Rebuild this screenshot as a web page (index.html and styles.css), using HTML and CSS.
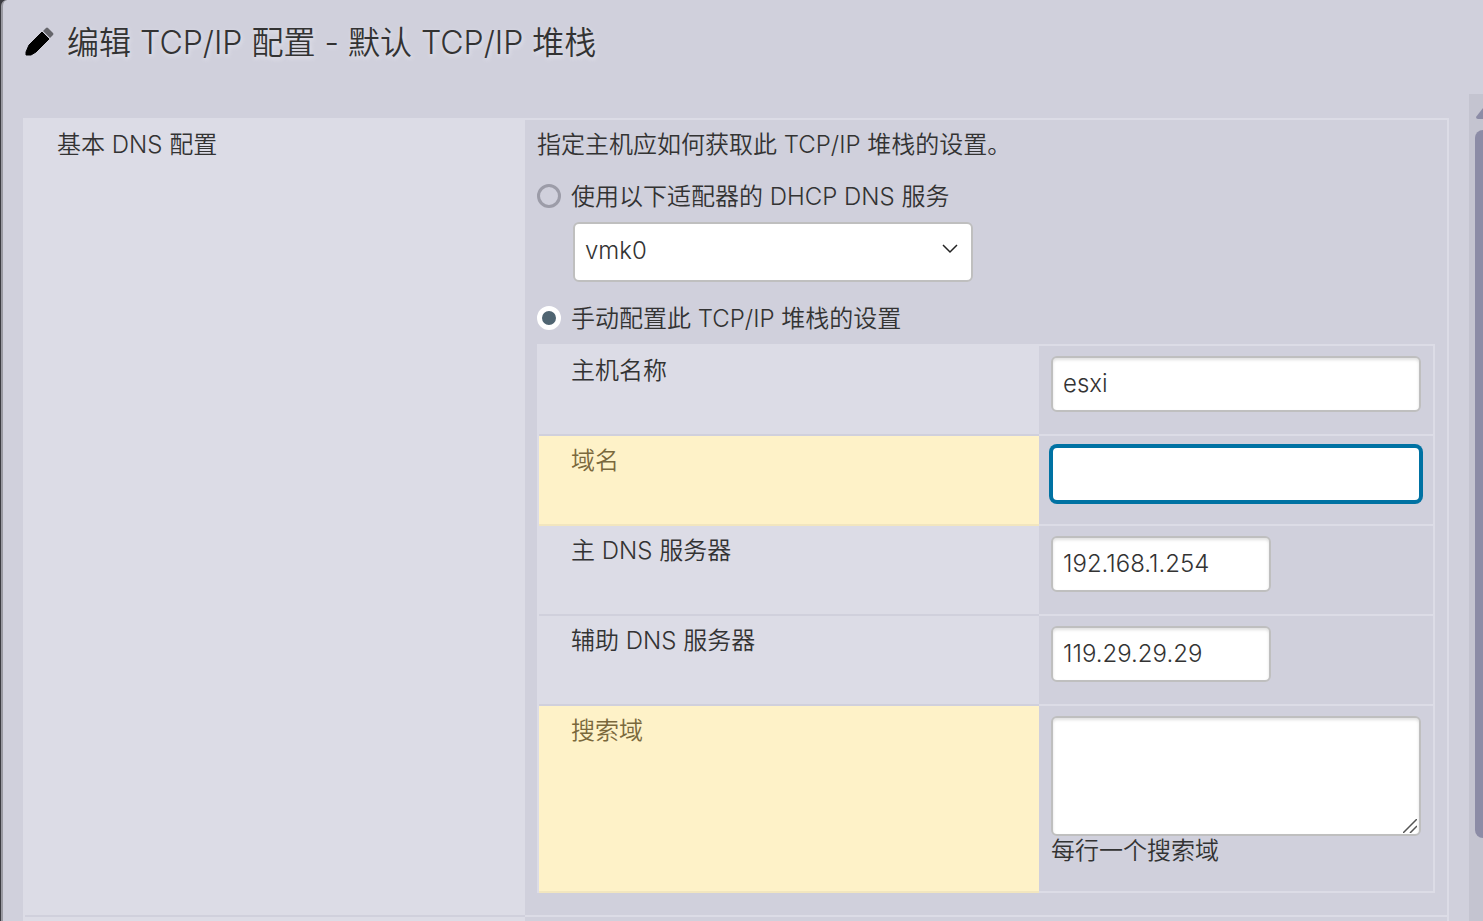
FILE: index.html
```html
<!DOCTYPE html>
<html lang="zh-CN">
<head>
    <meta charset="UTF-8">
    <meta name="viewport" content="width=device-width, initial-scale=1.0">
    <title>编辑 TCP/IP 配置</title>
    <link rel="stylesheet" href="styles.css">
</head>
<body>
    <div class="dialog">
        <header class="dialog-header">
            <svg class="pencil-icon" viewBox="0 0 32 30" aria-hidden="true">
                <path d="M3 28 L3 25 L6 18 L19 5 L26 12 L13 25 L8 28 Z" fill="#000" stroke="#000" stroke-linejoin="round"/>
                <path d="M20 4 L23 1 Q24 0 25 1 L30 6 Q31 7 30 8 L27 11 Z" fill="#65656b"/>
            </svg>
            <h1>编辑 TCP/IP 配置 - 默认 TCP/IP 堆栈</h1>
        </header>
        <div class="dialog-body">
            <form class="settings">
                <div class="row">
                    <div class="name">基本 DNS 配置</div>
                    <div class="value section">
                        <p class="intro">指定主机应如何获取此 TCP/IP 堆栈的设置。</p>
                        <div class="option">
                            <input type="radio" name="mode" id="modeDhcp">
                            <label for="modeDhcp">使用以下适配器的 DHCP DNS 服务</label>
                        </div>
                        <div class="select-wrap">
                            <select aria-label="适配器">
                                <option>vmk0</option>
                            </select>
                            <svg class="chevron" viewBox="0 0 16 10" aria-hidden="true">
                                <path d="M1 1 L8 8 L15 1" fill="none" stroke="#222" stroke-width="1.5"/>
                            </svg>
                        </div>
                        <div class="option">
                            <input type="radio" name="mode" id="modeManual" checked>
                            <label for="modeManual">手动配置此 TCP/IP 堆栈的设置</label>
                        </div>
                        <div class="settings">
                            <div class="row">
                                <label class="name" for="hostName">主机名称</label>
                                <div class="value"><input type="text" id="hostName" value="esxi"></div>
                            </div>
                            <div class="row warning">
                                <label class="name" for="domainName">域名</label>
                                <div class="value"><input type="text" id="domainName" class="active"></div>
                            </div>
                            <div class="row">
                                <label class="name" for="primaryDns">主 DNS 服务器</label>
                                <div class="value"><input type="text" id="primaryDns" class="short" value="192.168.1.254"></div>
                            </div>
                            <div class="row">
                                <label class="name" for="secondaryDns">辅助 DNS 服务器</label>
                                <div class="value"><input type="text" id="secondaryDns" class="short" value="119.29.29.29"></div>
                            </div>
                            <div class="row warning">
                                <label class="name" for="searchDomains">搜索域</label>
                                <div class="value">
                                    <div class="textarea-wrap">
                                        <textarea id="searchDomains"></textarea>
                                        <svg class="grip" viewBox="0 0 14 14" aria-hidden="true">
                                            <path d="M0 14 L14 0 M7 14 L14 7" stroke="#555" stroke-width="1.5"/>
                                        </svg>
                                    </div>
                                    <div class="help">每行一个搜索域</div>
                                </div>
                            </div>
                        </div>
                    </div>
                </div>
                <div class="row">
                    <div class="name"></div>
                    <div class="value"></div>
                </div>
            </form>
            <div class="scrollbar" aria-hidden="true">
                <svg class="scroll-arrow" viewBox="0 0 7 11">
                    <path d="M7 0 L0 9 Q0 11 2 11 L7 11 Z" fill="#8c8ca6"/>
                </svg>
                <div class="scroll-thumb"></div>
            </div>
        </div>
    </div>
</body>
</html>
```
FILE: styles.css
```css
:root {
    --bg-color: #d0d0dc;
    --label-bg: #dcdce6;
    --text-color: #333;
    --field-border: #bfbfbf;
    --focus-color: #0072a3;
    --warning-bg: #fef2c8;
    --warning-text: #7a683c;
    --thumb-color: #8c8ca6;
}

* {
    box-sizing: border-box;
}
body {
    margin: 0;
    height: 100vh;
    overflow: hidden;
    background-color: #3c3c42;
    color: var(--text-color);
    font-family: Inter, "Noto Sans CJK SC", sans-serif;
    font-size: 24px;
    font-weight: 350;
    line-height: 36px;
}
.dialog {
    display: flex;
    flex-direction: column;
    height: 100%;
    margin-left: 1px;
    border-left: 2px solid #9a9aa2;
    border-top-left-radius: 6px;
    background-color: var(--bg-color);
}
.dialog-header {
    display: flex;
    align-items: center;
    gap: 12px;
    height: 94px;
    padding: 0 20px 10px;
    flex: none;
}
.pencil-icon {
    width: 32px;
    height: 30px;
}
h1 {
    margin: 0;
    padding-top: 2px;
    font-size: 32px;
    font-weight: 350;
    line-height: 48px;
    text-shadow: 1px 2px 4px #e6e6ee;
}
.dialog-body {
    display: flex;
    flex: 1;
    min-height: 0;
    gap: 20px;
    padding-left: 20px;
}
.settings {
    border: 2px solid var(--label-bg);
    border-bottom: 0;
}
form.settings {
    flex: 1;
    margin-top: 24px;
}
.row {
    display: flex;
}
.name {
    flex: 0 0 500px;
    padding: 7px 32px;
    background-color: var(--label-bg);
    border-bottom: 2px solid var(--bg-color);
}
.value {
    flex: 1;
    min-width: 0;
    padding: 10px 12px 22px;
    border-bottom: 2px solid var(--label-bg);
}
.section {
    padding-top: 7px;
}
.warning .name {
    background-color: var(--warning-bg);
    border-bottom-color: #f2e6bf;
    color: var(--warning-text);
}
.intro {
    margin: 0 0 16px;
}
.option {
    display: flex;
    align-items: center;
    gap: 10px;
}
input[type="radio"] {
    appearance: none;
    width: 24px;
    height: 24px;
    margin: 0 0 2px;
    border: 3px solid #9c9ca8;
    border-radius: 50%;
}
input[type="radio"]:checked {
    border: 5px solid white;
    background-color: #506572;
}
.select-wrap {
    position: relative;
    width: 400px;
    margin: 7px 0 19px 36px;
}
select,
input[type="text"],
textarea {
    display: block;
    width: 100%;
    height: 56px;
    padding: 0 10px 2px;
    border: 2px solid var(--field-border);
    border-radius: 6px;
    background-color: white;
    color: var(--text-color);
    font: inherit;
    outline: none;
}
input[type="text"],
textarea {
    box-shadow: inset 0 2px 3px rgba(0, 0, 0, 0.12);
}
select {
    appearance: none;
    height: 60px;
    padding-bottom: 2px;
}
.chevron {
    position: absolute;
    top: 22px;
    right: 15px;
    width: 16px;
    height: 10px;
    pointer-events: none;
}
input.short {
    width: 220px;
}
input.active,
input[type="text"]:focus {
    border-color: var(--focus-color);
    box-shadow: 0 0 0 2px var(--focus-color);
}
.textarea-wrap {
    position: relative;
}
textarea {
    height: 120px;
    resize: none;
}
.grip {
    position: absolute;
    right: 4px;
    bottom: 3px;
    width: 14px;
    height: 14px;
}
.help {
    margin-bottom: 3px;
    line-height: 30px;
}
.section > .settings {
    margin-top: 7px;
}
.scrollbar {
    flex: 0 0 14px;
    padding-top: 14px;
    background-color: #c4c4d0;
}
.scroll-arrow {
    display: block;
    width: 7px;
    height: 11px;
    margin-left: auto;
}
.scroll-thumb {
    height: calc(100% - 105px);
    margin: 11px 0 0 6px;
    border-radius: 10px 0 0 10px;
    background-color: var(--thumb-color);
}
```
